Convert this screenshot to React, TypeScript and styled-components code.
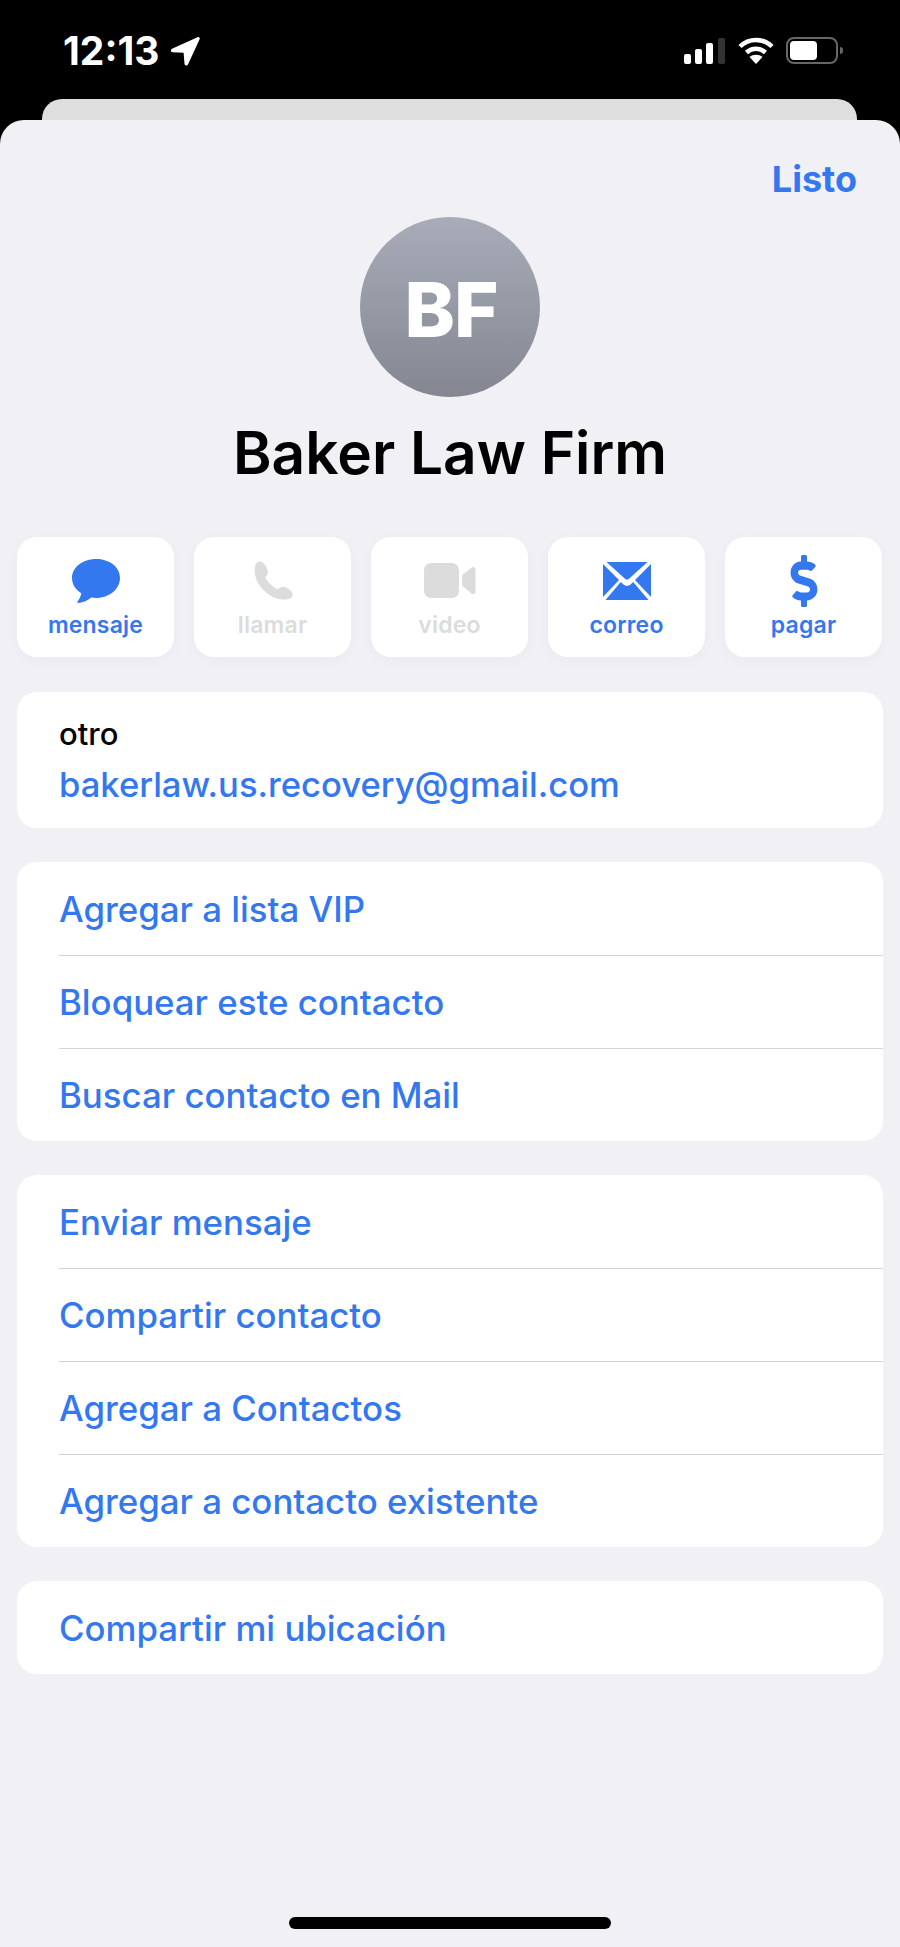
import React from 'react';
import styled, { createGlobalStyle } from 'styled-components';
import { FaDollarSign } from 'react-icons/fa';

const BLUE = '#3478f0';
const MUTED = '#dcdcdc';

const GlobalStyle = createGlobalStyle`
  html, body {
    margin: 0;
    padding: 0;
    background: #000;
    font-family: Inter, "Liberation Sans", sans-serif;
  }
`;

const actions = [
  { label: 'mensaje', icon: 'message', off: false },
  { label: 'llamar', icon: 'phone', off: true },
  { label: 'video', icon: 'video', off: true },
  { label: 'correo', icon: 'mail', off: false },
  { label: 'pagar', icon: 'dollar', off: false },
];

const groups = [
  ['Agregar a lista VIP', 'Bloquear este contacto', 'Buscar contacto en Mail'],
  ['Enviar mensaje', 'Compartir contacto', 'Agregar a Contactos', 'Agregar a contacto existente'],
  ['Compartir mi ubicación'],
];

const ActionIcon: React.FC<{ name: string }> = ({ name }) => {
  if (name === 'message') {
    return (
      <svg width="50" height="46" viewBox="0 0 50 46">
        <path
          fill="currentColor"
          d="M25 1C11.800 1 1 9.300 1 20c0 6.300 3.600 11.700 9.300 15.200-.4 3.200-2.100 6.100-3.700 8-.7.900-.1 1.800 1 1.700 4.500-.4 9.300-2.300 12.600-5.300 1.600.3 3.200.4 4.800.4 13.200 0 24-8.800 24-20S38.200 1 25 1z"
        />
      </svg>
    );
  }
  if (name === 'phone') {
    return (
      <svg width="40" height="40" viewBox="0 0 40 40">
        <path fill="none" stroke="currentColor" strokeWidth="9" strokeLinecap="round" d="M6 9C6 21 19 35 32 34" />
        <ellipse cx="8.500" cy="8.500" rx="5.500" ry="8.500" transform="rotate(-28 8.500 8.500)" fill="currentColor" />
        <ellipse cx="32" cy="32" rx="8" ry="5.500" transform="rotate(28 32 32)" fill="currentColor" />
      </svg>
    );
  }
  if (name === 'video') {
    return (
      <svg width="52" height="36" viewBox="0 0 52 36">
        <rect x="0" y="0" width="35" height="35" rx="7" fill="currentColor" />
        <path fill="currentColor" d="M38 12.500 47.500 4.500c1.500-1.200 4-.4 4 1.800v22.400c0 2.200-2.500 3-4 1.800L38 22.500z" />
      </svg>
    );
  }
  if (name === 'mail') {
    return (
      <svg width="48" height="38" viewBox="0 0 48 38">
        <path fill="currentColor" d="M3.500 0h41L26 16.800c-1.200 1.100-2.800 1.100-4 0z" />
        <path fill="currentColor" d="M0 2v33l16-17zM48 2v33L32 18z" />
        <path fill="currentColor" d="M2.500 38h43L30.200 20l-2.700 2.500c-2 1.800-5 1.800-7 0L17.800 20z" />
      </svg>
    );
  }
  return <FaDollarSign size={52} style={{ transform: 'scaleX(0.92)' }} />;
};

const App: React.FC = () => {
  return (
    <Screen>
      <GlobalStyle />
      <StatusBar>
        <TimeBlock>
          <Time>12:13</Time>
          <svg width="30" height="30" viewBox="0 0 30 30">
            <path
              fill="#fff"
              d="M27.500 1.200 2 12.700c-1.800.9-1.300 3.400.7 3.500l10.900.6.900 11c.2 2 2.700 2.400 3.500.6L29.600 3.300c.6-1.400-.8-2.700-2.100-2.100z"
            />
          </svg>
        </TimeBlock>
        <StatusIcons>
          <svg width="42" height="26" viewBox="0 0 42 26">
            <rect x="0" y="16" width="7" height="10" rx="2" fill="#fff" />
            <rect x="11" y="11" width="7" height="15" rx="2" fill="#fff" />
            <rect x="22" y="5" width="7" height="21" rx="2" fill="#fff" />
            <rect x="34" y="0" width="7" height="26" rx="2" fill="#333" />
          </svg>
          <svg width="36" height="27" viewBox="0 0 36 27">
            <path fill="none" stroke="#fff" strokeWidth="4.500" d="M2 9.500c9-8.800 23-8.800 32 0" />
            <path fill="none" stroke="#fff" strokeWidth="4.500" d="M8.500 15.500c5.500-5 13.500-5 19 0" />
            <path fill="#fff" d="M18 27 11.500 20c3.700-3.100 9.300-3.100 13 0z" />
          </svg>
          <Battery>
            <BatteryFill />
            <BatteryNub />
          </Battery>
        </StatusIcons>
      </StatusBar>
      <BackSheet />
      <Sheet>
        <Done>Listo</Done>
        <Avatar>BF</Avatar>
        <Name>Baker Law Firm</Name>
        <Actions>
          {actions.map((a) => (
            <ActionButton key={a.label} $off={a.off}>
              <IconSlot>
                <ActionIcon name={a.icon} />
              </IconSlot>
              <ActionLabel>{a.label}</ActionLabel>
            </ActionButton>
          ))}
        </Actions>
        <Cards>
          <EmailCard>
            <EmailLabel>otro</EmailLabel>
            <EmailValue>bakerlaw.us.recovery@gmail.com</EmailValue>
          </EmailCard>
          {groups.map((rows, i) => (
            <Card key={i}>
              {rows.map((row) => (
                <Row key={row}>{row}</Row>
              ))}
            </Card>
          ))}
        </Cards>
        <HomeBar />
      </Sheet>
    </Screen>
  );
};

export default App;

const Screen = styled.div`
  width: 900px;
  height: 1947px;
  display: flex;
  flex-direction: column;
  background: #000;
  overflow: hidden;
`;

const StatusBar = styled.div`
  height: 99px;
  flex: none;
  padding: 36px 57px 0 63px;
  box-sizing: border-box;
  display: flex;
  justify-content: space-between;
  align-items: flex-start;
`;

const TimeBlock = styled.div`
  display: flex;
  align-items: center;
  gap: 11px;
`;

const Time = styled.span`
  color: #fff;
  font-size: 39px;
  line-height: 30px;
  font-weight: 700;
`;

const StatusIcons = styled.div`
  display: flex;
  align-items: center;
  gap: 12px;
  padding-top: 1px;
`;

const Battery = styled.div`
  position: relative;
  width: 52px;
  height: 27px;
  box-sizing: border-box;
  border: 2px solid #666;
  border-radius: 8px;
  padding: 2px;
  margin-right: 5px;
`;

const BatteryFill = styled.div`
  width: 27px;
  height: 100%;
  background: #fff;
  border-radius: 4px;
`;

const BatteryNub = styled.div`
  position: absolute;
  right: -7px;
  top: 8px;
  width: 3px;
  height: 7px;
  background: #666;
  border-radius: 0 3px 3px 0;
`;

const BackSheet = styled.div`
  height: 21px;
  flex: none;
  margin: 0 43px 0 42px;
  background: #dedede;
  border-radius: 20px 20px 0 0;
`;

const Sheet = styled.div`
  flex: 1;
  position: relative;
  display: flex;
  flex-direction: column;
  background: #f0f0f5;
  border-radius: 24px 24px 0 0;
  padding: 0 17px;
`;

const Done = styled.div`
  align-self: flex-end;
  margin: 38px 26px 0 0;
  color: ${BLUE};
  font-size: 36px;
  line-height: 42px;
  font-weight: 700;
`;

const Avatar = styled.div`
  width: 180px;
  height: 180px;
  margin: 17px auto 0;
  padding: 4px 0 0 2px;
  box-sizing: border-box;
  border-radius: 50%;
  background: linear-gradient(180deg, #a7acb8, #848791);
  color: #fff;
  display: flex;
  align-items: center;
  justify-content: center;
  font-size: 76px;
  font-weight: 800;
  letter-spacing: -1px;
`;

const Name = styled.div`
  margin-top: 21px;
  height: 70px;
  line-height: 70px;
  text-align: center;
  color: #000;
  font-size: 58.6px;
  font-weight: 600;
`;

const Actions = styled.div`
  margin: 49px 0 0;
  display: grid;
  grid-template-columns: repeat(5, 157px);
  gap: 20px;
`;

const ActionButton = styled.div<{ $off: boolean }>`
  height: 120px;
  background: #fff;
  border-radius: 20px;
  box-shadow: 0 4px 14px rgba(60, 60, 80, 0.03);
  color: ${(p) => (p.$off ? MUTED : BLUE)};
  display: flex;
  flex-direction: column;
  align-items: center;
`;

const IconSlot = styled.div`
  height: 52px;
  margin-top: 18px;
  display: flex;
  align-items: center;
  justify-content: center;
`;

const ActionLabel = styled.div`
  margin-top: 4px;
  font-size: 23px;
  line-height: 28px;
  font-weight: 600;
  letter-spacing: 0.2px;
`;

const Cards = styled.div`
  margin-top: 35px;
  display: flex;
  flex-direction: column;
  gap: 34px;
`;

const Card = styled.div`
  background: #fff;
  border-radius: 20px;
  overflow: hidden;
`;

const EmailCard = styled(Card)`
  height: 136px;
  padding: 23px 0 0 42px;
  box-sizing: border-box;
`;

const EmailLabel = styled.div`
  color: #000;
  font-size: 31px;
  line-height: 38px;
  font-weight: 500;
`;

const EmailValue = styled.div`
  margin-top: 12px;
  color: ${BLUE};
  font-size: 34.6px;
  line-height: 38px;
  font-weight: 500;
`;

const Row = styled.div`
  height: 93px;
  margin-left: 42px;
  line-height: 95px;
  color: ${BLUE};
  font-size: 34.8px;
  font-weight: 500;
  & + & {
    box-shadow: inset 0 1px 0 #d4d4d8;
  }
`;

const HomeBar = styled.div`
  position: absolute;
  left: 289px;
  bottom: 18px;
  width: 322px;
  height: 12px;
  border-radius: 6px;
  background: #000;
`;
